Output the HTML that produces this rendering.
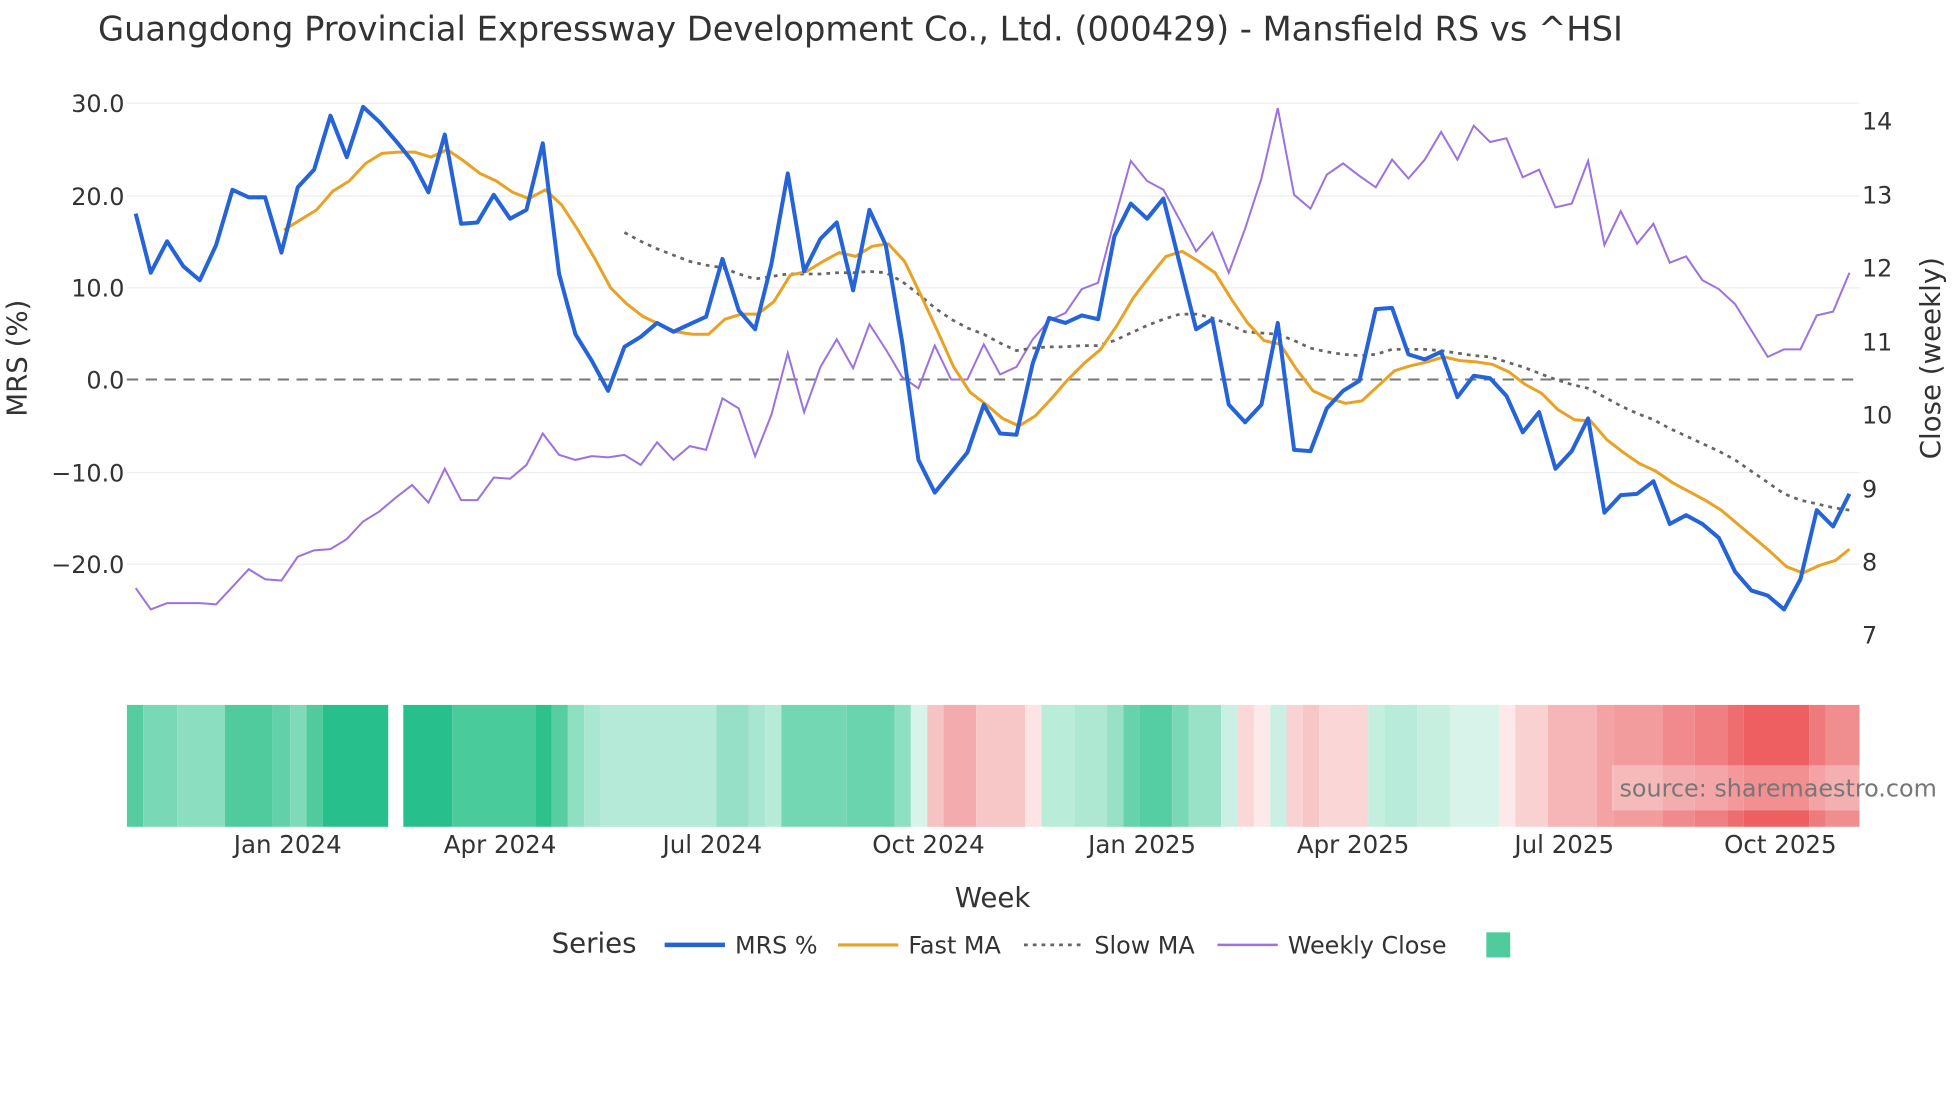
<!DOCTYPE html>
<html><head><meta charset="utf-8"><style>html,body{margin:0;padding:0;background:#fff}svg{display:block}text{font-family:"DejaVu Sans","Liberation Sans",sans-serif;fill:#333}</style></head><body>
<svg width="1960" height="1102" viewBox="0 0 1560 877" xmlns="http://www.w3.org/2000/svg">
<rect width="1560" height="877" fill="#fff"/>
<text x="78" y="32" font-size="26.8" fill="#333">Guangdong Provincial Expressway Development Co., Ltd. (000429) - Mansfield RS vs ^HSI</text>
<g stroke="#eceef3" stroke-width="1">
<line x1="101" x2="1480" y1="82" y2="82"/><line x1="101" x2="1480" y1="156" y2="156"/><line x1="101" x2="1480" y1="229" y2="229"/><line x1="101" x2="1480" y1="376" y2="376"/><line x1="101" x2="1480" y1="449" y2="449"/>
</g>
<line x1="101" x2="1480" y1="302" y2="302" stroke="#777" stroke-width="1.6" stroke-dasharray="9,6"/>
<g font-size="19" text-anchor="end">
<text x="99" y="89">30.0</text><text x="99" y="163">20.0</text><text x="99" y="236">10.0</text><text x="99" y="309">0.0</text><text x="99" y="383">−10.0</text><text x="99" y="456">−20.0</text>
</g>
<g font-size="19">
<text x="1482" y="103">14</text><text x="1482" y="162">13</text><text x="1482" y="220">12</text><text x="1482" y="279">11</text><text x="1482" y="337">10</text><text x="1482" y="396">9</text><text x="1482" y="454">8</text><text x="1482" y="512">7</text>
</g>
<text transform="translate(21,285) rotate(-90)" font-size="22" text-anchor="middle">MRS (%)</text>
<text transform="translate(1544,285) rotate(-90)" font-size="22" text-anchor="middle">Close (weekly)</text>
<polyline fill="none" stroke="#9b72e0" stroke-width="1.6" points="108,468 120,485 133,480 146,480 159,480 172,481 185,467 198,453 211,461 224,462 237,443 250,438 263,437 276,429 289,415 302,407 315,396 328,386 341,400 354,373 367,398 380,398 393,380 406,381 419,370 432,345 445,362 458,366 471,363 484,364 497,362 510,370 523,352 536,366 549,355 562,358 575,317 588,325 601,363 614,330 627,281 640,328 653,292 666,270 679,293 692,258 705,278 718,300 731,309 744,275 757,302 770,302 783,274 796,298 809,292 822,270 835,255 848,249 861,230 874,225 887,175 900,128 913,144 926,151 939,175 952,200 965,185 978,217 991,182 1004,142 1017,86 1030,155 1043,166 1056,139 1069,130 1082,140 1095,149 1108,127 1121,142 1134,127 1147,105 1160,127 1173,100 1186,113 1199,110 1212,141 1225,135 1238,165 1251,162 1264,128 1277,195 1290,168 1303,194 1316,178 1329,209 1342,204 1355,223 1368,230 1381,242 1394,263 1407,284 1420,278 1433,278 1446,251 1459,248 1472,217"/>
<polyline fill="none" stroke="#666" stroke-width="2.2" stroke-dasharray="3,4" points="497,185 510,192 523,198 536,203 549,208 562,211 575,213 588,218 601,222 614,220 627,218 640,218 653,218 666,217 679,217 692,216 705,217 718,224 731,234 744,245 757,254 770,261 783,266 796,273 809,279 822,277 835,276 848,276 861,275 874,275 887,271 900,265 913,259 926,254 939,250 952,250 965,253 978,258 991,264 1004,265 1017,266 1030,271 1043,277 1056,280 1069,282 1082,283 1095,282 1108,278 1121,278 1134,278 1147,279 1160,281 1173,283 1186,284 1199,288 1212,292 1225,297 1238,302 1251,306 1264,309 1277,316 1290,323 1303,329 1316,334 1329,341 1342,347 1355,353 1368,359 1381,366 1394,375 1407,384 1420,393 1433,398 1446,401 1459,404 1472,406"/>
<polyline fill="none" stroke="#e9a224" stroke-width="2.4" points="226,183 239,175 252,167 265,152 278,144 291,130 304,122 317,121 330,121 343,125 356,119 369,128 382,138 395,144 408,153 421,158 434,151 447,163 460,183 473,205 486,229 499,242 512,252 525,258 538,264 551,266 564,266 577,254 590,250 603,250 616,240 629,219 642,216 655,208 668,201 681,204 694,196 707,194 720,208 733,235 746,263 759,292 772,312 785,322 798,333 811,339 824,331 837,317 850,302 863,289 876,278 889,259 902,237 915,220 928,204 941,200 954,208 967,217 980,238 993,257 1006,271 1019,274 1032,294 1045,311 1058,317 1071,321 1084,319 1097,307 1110,295 1123,291 1136,288 1149,284 1162,287 1175,288 1188,290 1201,296 1214,306 1227,313 1240,326 1253,334 1266,335 1279,350 1292,360 1305,369 1318,375 1331,384 1344,391 1357,398 1370,406 1383,417 1396,428 1409,439 1422,451 1435,456 1448,450 1461,446 1472,437"/>
<polyline fill="none" stroke="#2563d9" stroke-width="3.2" stroke-linejoin="round" points="108,170 120,217 133,192 146,212 159,223 172,195 185,151 198,157 211,157 224,201 237,149 250,135 263,92 276,125 289,85 302,97 315,112 328,128 341,153 354,107 367,178 380,177 393,155 406,174 419,167 432,114 445,218 458,266 471,287 484,311 497,276 510,268 523,257 536,264 549,258 562,252 575,206 588,247 601,262 614,210 627,138 640,216 653,190 666,177 679,231 692,167 705,195 718,272 731,366 744,392 757,376 770,360 783,322 796,345 809,346 822,289 835,253 848,257 861,251 874,254 887,188 900,162 913,174 926,158 939,210 952,262 965,254 978,322 991,336 1004,322 1017,257 1030,358 1043,359 1056,325 1069,311 1082,303 1095,246 1108,245 1121,282 1134,286 1147,280 1160,316 1173,299 1186,301 1199,315 1212,344 1225,328 1238,373 1251,359 1264,333 1277,408 1290,394 1303,393 1316,383 1329,417 1342,410 1355,417 1368,428 1381,455 1394,470 1407,474 1420,485 1433,461 1446,406 1459,419 1472,393"/>
<g>
<rect x="101" y="561" width="13" height="97" fill="#55cda0"/><rect x="114" y="561" width="27" height="97" fill="#79d9b6"/><rect x="141" y="561" width="38" height="97" fill="#8bdec0"/><rect x="179" y="561" width="38" height="97" fill="#4fcb9d"/><rect x="217" y="561" width="14" height="97" fill="#62d1a9"/><rect x="231" y="561" width="13" height="97" fill="#7fdab9"/><rect x="244" y="561" width="13" height="97" fill="#4fcb9d"/><rect x="257" y="561" width="52" height="97" fill="#27bf8b"/>
<rect x="321" y="561" width="39" height="97" fill="#27bf8b"/><rect x="360" y="561" width="66" height="97" fill="#4acb9c"/><rect x="426" y="561" width="13" height="97" fill="#2dc18e"/><rect x="439" y="561" width="13" height="97" fill="#57cea2"/><rect x="452" y="561" width="13" height="97" fill="#8fdfc2"/><rect x="465" y="561" width="13" height="97" fill="#aae7d3"/><rect x="478" y="561" width="92" height="97" fill="#b4ead7"/><rect x="570" y="561" width="26" height="97" fill="#95e0c6"/><rect x="596" y="561" width="13" height="97" fill="#a8e6d1"/><rect x="609" y="561" width="13" height="97" fill="#b6ebd8"/><rect x="622" y="561" width="52" height="97" fill="#73d7b4"/><rect x="674" y="561" width="38" height="97" fill="#69d4ae"/><rect x="712" y="561" width="13" height="97" fill="#8fdfc2"/><rect x="725" y="561" width="13" height="97" fill="#d8f4ea"/><rect x="738" y="561" width="13" height="97" fill="#f6c3c3"/><rect x="751" y="561" width="26" height="97" fill="#f4abad"/><rect x="777" y="561" width="39" height="97" fill="#f7c6c7"/><rect x="816" y="561" width="13" height="97" fill="#fce4e4"/><rect x="829" y="561" width="26" height="97" fill="#b9ecd9"/><rect x="855" y="561" width="26" height="97" fill="#aee8d3"/><rect x="881" y="561" width="13" height="97" fill="#98e1c7"/><rect x="894" y="561" width="13" height="97" fill="#66d3ac"/><rect x="907" y="561" width="26" height="97" fill="#56cea3"/><rect x="933" y="561" width="13" height="97" fill="#79d9b6"/><rect x="946" y="561" width="26" height="97" fill="#99e2c8"/><rect x="972" y="561" width="13" height="97" fill="#c9f0e2"/><rect x="985" y="561" width="13" height="97" fill="#fad8d8"/><rect x="998" y="561" width="13" height="97" fill="#fde9e9"/><rect x="1011" y="561" width="13" height="97" fill="#c9f0e2"/><rect x="1024" y="561" width="13" height="97" fill="#f9d3d3"/><rect x="1037" y="561" width="13" height="97" fill="#f7c6c7"/><rect x="1050" y="561" width="39" height="97" fill="#fad6d6"/><rect x="1089" y="561" width="13" height="97" fill="#c4efdf"/><rect x="1102" y="561" width="26" height="97" fill="#b8ebd9"/><rect x="1128" y="561" width="26" height="97" fill="#c6efe0"/><rect x="1154" y="561" width="39" height="97" fill="#d8f4ea"/><rect x="1193" y="561" width="13" height="97" fill="#fde9e9"/><rect x="1206" y="561" width="26" height="97" fill="#f9d1d1"/><rect x="1232" y="561" width="39" height="97" fill="#f6b5b6"/><rect x="1271" y="561" width="13" height="97" fill="#f3a3a4"/><rect x="1284" y="561" width="39" height="97" fill="#f29c9d"/><rect x="1323" y="561" width="26" height="97" fill="#f08a8c"/><rect x="1349" y="561" width="26" height="97" fill="#ef7f81"/><rect x="1375" y="561" width="13" height="97" fill="#ee6e70"/><rect x="1388" y="561" width="52" height="97" fill="#ed5f61"/><rect x="1440" y="561" width="13" height="97" fill="#ef7a7c"/><rect x="1453" y="561" width="27" height="97" fill="#f08e8f"/>
</g>
<rect x="1283" y="609" width="277" height="36" fill="#fff" fill-opacity="0.3"/>
<text x="1289" y="634" font-size="19" style="fill:#777">source: sharemaestro.com</text>
<g font-size="19.5" text-anchor="middle">
<text x="229" y="679">Jan 2024</text><text x="398" y="679">Apr 2024</text><text x="567" y="679">Jul 2024</text><text x="739" y="679">Oct 2024</text><text x="909" y="679">Jan 2025</text><text x="1077" y="679">Apr 2025</text><text x="1245" y="679">Jul 2025</text><text x="1417" y="679">Oct 2025</text>
</g>
<text x="790" y="722" font-size="22" text-anchor="middle">Week</text>
<text x="439" y="758" font-size="22">Series</text>
<line x1="529" x2="577" y1="752" y2="752" stroke="#2563d9" stroke-width="3.5"/>
<text x="585" y="759" font-size="19">MRS %</text>
<line x1="667" x2="715" y1="752" y2="752" stroke="#e9a224" stroke-width="2.5"/>
<text x="723" y="759" font-size="19">Fast MA</text>
<line x1="815" x2="863" y1="752" y2="752" stroke="#666" stroke-width="2.2" stroke-dasharray="3,4"/>
<text x="871" y="759" font-size="19">Slow MA</text>
<line x1="969" x2="1017" y1="752" y2="752" stroke="#9b72e0" stroke-width="2"/>
<text x="1025" y="759" font-size="19">Weekly Close</text>
<rect x="1183" y="742" width="19" height="20" fill="#4fcb9d"/>
</svg>
</body></html>
